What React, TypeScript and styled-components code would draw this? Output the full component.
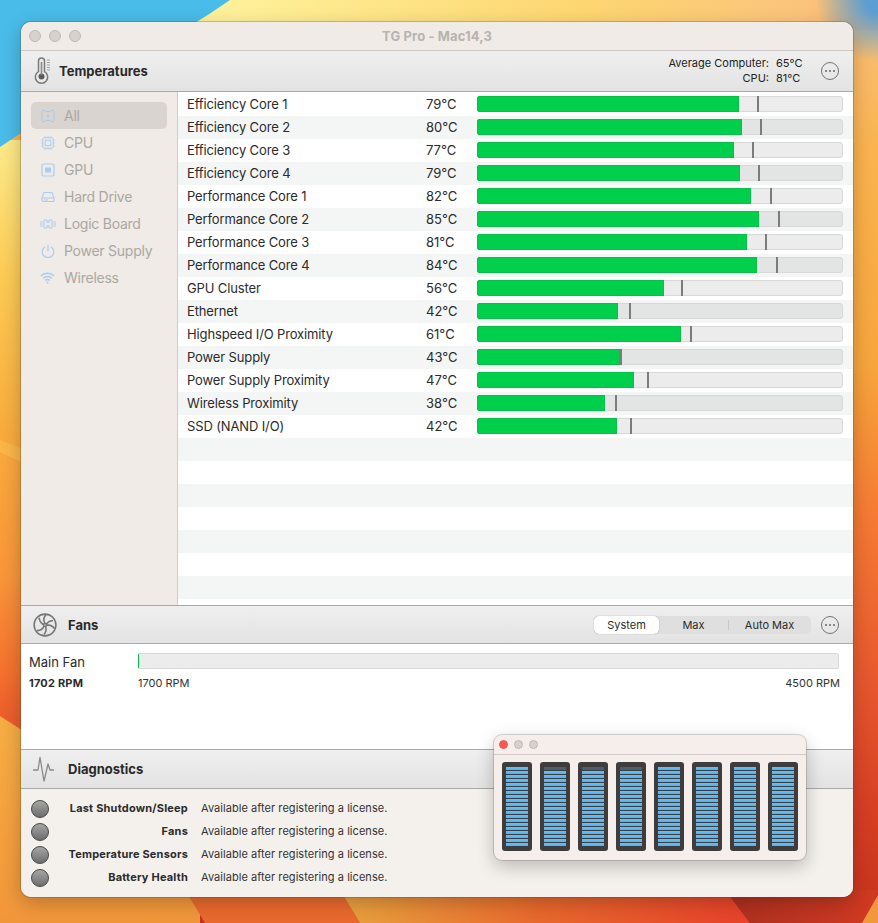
import React from "react";
import styled, { createGlobalStyle } from "styled-components";

const Global = createGlobalStyle`
  html, body { margin: 0; padding: 0; width: 878px; height: 923px; overflow: hidden; }
  body { font-family: "Inter", "Liberation Sans", Arial, sans-serif; -webkit-font-smoothing: antialiased; }
  #root { width: 878px; height: 923px; }
`;

const Desktop = styled.div`
  position: relative;
  width: 878px;
  height: 923px;
  overflow: hidden;
  padding: 22px 25px 26px 21px;
  box-sizing: border-box;
  background: #f08a38;
`;
const Wallpaper = styled.svg`
  position: absolute;
  inset: 0;
  width: 878px;
  height: 923px;
`;
const Window = styled.div`
  position: relative;
  display: flex;
  flex-direction: column;
  height: 875px;
  border-radius: 10px;
  overflow: hidden;
  background: #f4f0ec;
  box-shadow: 0 0 0 1px rgba(90, 70, 40, 0.28), 0 6px 20px rgba(0, 0, 0, 0.24);
`;
const TitleBar = styled.div`
  flex: none;
  height: 28px;
  display: flex;
  align-items: center;
  justify-content: center;
  position: relative;
  background: #f0ebe6;
  border-bottom: 1px solid #c9c7c5;
  color: #b7b3af;
  font: 700 13px "Inter", "Liberation Sans", sans-serif;
  letter-spacing: 0.12px;
`;
const Lights = styled.div`
  position: absolute;
  left: 8px;
  top: 8px;
  display: flex;
  gap: 8px;
`;
const Light = styled.span<{ $size?: number; $red?: boolean }>`
  display: block;
  width: ${(p) => p.$size ?? 12}px;
  height: ${(p) => p.$size ?? 12}px;
  border-radius: 50%;
  box-sizing: border-box;
  background: ${(p) => (p.$red ? "#fb5252" : "#d8d2ce")};
  border: 1px solid ${(p) => (p.$red ? "#e8605a" : "#bdb8b4")};
`;
const SectionHeader = styled.div<{ $h: number; $top?: boolean }>`
  flex: none;
  height: ${(p) => p.$h}px;
  box-sizing: content-box;
  display: flex;
  align-items: center;
  background: linear-gradient(#efefef, #e3e3e3);
  border-bottom: 1px solid #a9a9a9;
  ${(p) => p.$top && "border-top: 1px solid #a9a9a9;"}
`;
const HeaderIcon = styled.div<{ $w: number }>`
  flex: none;
  width: ${(p) => p.$w}px;
  display: flex;
  justify-content: center;
`;
const HeaderTitle = styled.div`
  font: 700 13px "Inter", "Liberation Sans", sans-serif;
  color: #2a2a2a;
`;
const HeaderRight = styled.div`
  margin-left: auto;
  display: flex;
  align-items: center;
`;
const Averages = styled.div`
  display: grid;
  grid-template-columns: auto 27px;
  column-gap: 7px;
  font: 400 11px/15px "Inter", "Liberation Sans", sans-serif;
  color: #222;
  text-align: right;
  margin-right: 18px;
  & > span:nth-child(even) { text-align: left; }
`;
const MoreBtn = styled.div`
  width: 18px;
  height: 18px;
  margin-right: 14px;
  border-radius: 50%;
  border: 1.2px solid #757575;
  box-sizing: border-box;
  display: flex;
  align-items: center;
  justify-content: center;
  gap: 1.6px;
  & > i { width: 2px; height: 2px; border-radius: 50%; background: #666; display: block; }
`;
const Main = styled.div`
  flex: none;
  height: 513px;
  display: flex;
`;
const Sidebar = styled.div`
  flex: none;
  width: 157px;
  box-sizing: border-box;
  padding: 10px 10px 0;
  border-right: 1px solid #cfcdcb;
  background: #f0ebe6;
  display: flex;
  flex-direction: column;
`;
const SideItem = styled.div<{ $active?: boolean }>`
  height: 27px;
  display: flex;
  align-items: center;
  border-radius: 5px;
  background: ${(p) => (p.$active ? "#d9d4d0" : "transparent")};
  color: #aba7a3;
  font: 400 14px "Inter", "Liberation Sans", sans-serif;
  letter-spacing: -0.25px;
`;
const SideIcon = styled.span`
  flex: none;
  width: 33px;
  display: flex;
  justify-content: center;
`;
const List = styled.div`
  flex: 1;
  background: #fff;
  padding-top: 1px;
  display: flex;
  flex-direction: column;
`;
const Row = styled.div<{ $alt: boolean }>`
  flex: none;
  height: 23px;
  box-sizing: border-box;
  padding-bottom: 1px;
  display: flex;
  align-items: center;
  background: ${(p) => (p.$alt ? "#f4f5f5" : "#fff")};
  font: 400 13px "Inter", "Liberation Sans", sans-serif;
  color: #2b2b2b;
`;
const RowName = styled.span`
  width: 248px;
  padding-left: 9px;
  box-sizing: border-box;
  letter-spacing: -0.13px;
`;
const RowTemp = styled.span`
  width: 51px;
`;
const Track = styled.div<{ $alt: boolean }>`
  position: relative;
  width: 366px;
  height: 16px;
  box-sizing: border-box;
  border: 1px solid #d8d8d8;
  border-radius: 3px;
  background: ${(p) => (p.$alt ? "#e3e4e4" : "#ececec")};
`;
const Fill = styled.div`
  position: absolute;
  left: -1px;
  top: -1px;
  bottom: -1px;
  background: #00cf4c;
  box-shadow: inset 0 0 0 1px #05c149;
  border-radius: 3px 0 0 3px;
`;
const Marker = styled.div`
  position: absolute;
  top: -1px;
  bottom: -1px;
  width: 2px;
  background: #7c7c7c;
`;
const FanBody = styled.div`
  flex: none;
  height: 106px;
  box-sizing: border-box;
  background: #fff;
  border-bottom: 1px solid #a9a9a9;
  padding: 9px 13px 0 8px;
  display: grid;
  grid-template-columns: 109px 1fr;
  grid-template-rows: 16px 17px;
  row-gap: 6px;
  font: 400 13px "Inter", "Liberation Sans", sans-serif;
  color: #2b2b2b;
`;
const FanName = styled.div`
  align-self: center;
  position: relative;
  top: 1px;
`;
const FanTrack = styled.div`
  height: 16px;
  margin-right: 1px;
  box-sizing: border-box;
  border: 1px solid #d8d8d8;
  border-left: 1px solid #00c04a;
  border-radius: 2px;
  background: #ececec;
`;
const FanRpm = styled.div`
  font: 700 11px/17px "Inter", "Liberation Sans", sans-serif;
  letter-spacing: 0.2px;
`;
const FanScale = styled.div`
  display: flex;
  justify-content: space-between;
  font: 400 11px/17px "Inter", "Liberation Sans", sans-serif;
  color: #333;
`;
const Segments = styled.div`
  display: flex;
  align-items: center;
  width: 217px;
  height: 18px;
  margin-right: 10px;
  border-radius: 5px;
  background: #dfdfdf;
  font: 400 11px "Inter", "Liberation Sans", sans-serif;
  color: #2b2b2b;
`;
const Segment = styled.div<{ $w: number; $on?: boolean; $sep?: boolean }>`
  width: ${(p) => p.$w}px;
  height: 18px;
  line-height: 18px;
  text-align: center;
  box-sizing: border-box;
  border-radius: 5px;
  background: ${(p) => (p.$on ? "#fff" : "transparent")};
  box-shadow: ${(p) => (p.$on ? "0 0 1px rgba(0,0,0,.45)" : "none")};
  position: relative;
  ${(p) => p.$sep && `&::before { content: ""; position: absolute; left: 0; top: 4px; bottom: 4px; width: 1px; background: #c8c8c8; }`}
`;
const DiagBody = styled.div`
  flex: 1;
  background: #f4f0ec;
  padding-top: 7px;
  display: flex;
  flex-direction: column;
`;
const DiagRow = styled.div`
  height: 23px;
  display: flex;
  align-items: center;
  font: 400 11px "Inter", "Liberation Sans", sans-serif;
  color: #333;
  letter-spacing: 0.05px;
`;
const Led = styled.span`
  flex: none;
  width: 18px;
  height: 18px;
  margin: 2px 0 0 10px;
  border-radius: 50%;
  box-sizing: border-box;
  border: 1px solid #444;
  background: linear-gradient(#a6a6a6, #6d6d6d);
`;
const DiagLabel = styled.span`
  width: 139px;
  text-align: right;
  font-weight: 700;
  margin-right: 13px;
  color: #2b2b2b;
  letter-spacing: 0.2px;
`;
const Mini = styled.div`
  position: absolute;
  left: 494px;
  top: 735px;
  width: 312px;
  height: 125px;
  border-radius: 8px;
  overflow: hidden;
  box-sizing: border-box;
  background: #f6eeeb;
  box-shadow: 0 0 0 1px rgba(120, 110, 105, 0.3), 0 6px 18px rgba(0, 0, 0, 0.24);
`;
const MiniBar = styled.div`
  height: 20px;
  box-sizing: border-box;
  border-bottom: 1px solid #d2cbc9;
  display: flex;
  align-items: center;
  padding-left: 5px;
  gap: 6px;
`;
const Meters = styled.div`
  display: flex;
  gap: 8px;
  padding: 7px 0 0 8px;
`;
const Meter = styled.div`
  width: 30px;
  height: 89px;
  box-sizing: border-box;
  border-radius: 3px;
  background: #3e3c3c;
  padding: 5px 4px 0;
  display: flex;
  flex-direction: column;
  gap: 1px;
`;
const Cell = styled.div<{ $dim?: boolean }>`
  flex: none;
  height: 3px;
  background: ${(p) => (p.$dim ? "#4a5f6c" : "linear-gradient(#66c0f7, #4cb4f4)")};
`;

const G = "#7a7a7a";
const ThermoIcon = () => (
  <svg width="20" height="28" viewBox="0 0 20 28" fill="none">
    <path d="M8.5 4a3 3 0 0 1 6 0v10.6a6.2 6.2 0 1 1-6 0z" stroke={G} strokeWidth="1.5" fill="#e9e9e9" />
    <circle cx="11.5" cy="19.6" r="3" fill="#5a5a5a" />
    <rect x="10.7" y="5" width="1.6" height="13" fill="#8a8a8a" />
    <path d="M17 3h3M17 5.5h3M17 8h3M17 10.5h3M17 13h3" stroke="#a0a0a0" strokeWidth="1.2" />
  </svg>
);
const FanIcon = () => (
  <svg width="24" height="24" viewBox="0 0 26 26" fill="none" stroke="#777" strokeWidth="1.7">
    <circle cx="13" cy="13" r="11.8" />
    <circle cx="13" cy="13" r="1.6" />
    <path d="M13 11.4C11 8 11 5 14 2M14.6 13.4c3.8-.8 6.4.2 8.6 3.6M12 14.3c-1.6 3.4-3.8 5-7.8 4.8M11.4 12.7C8.5 11 7 9 6.6 5M14.4 12.2c2-3 4.3-4.2 7.2-3.8M13.6 14.6c1.2 3.4.6 5.8-1.6 8.6" />
  </svg>
);
const PulseIcon = () => (
  <svg width="24" height="26" viewBox="0 0 24 26" fill="none" stroke="#8a8a8a" strokeWidth="1.3" strokeLinejoin="round">
    <path d="M0 14h5L7 1.5 11 25l4-17 2 6h4" />
  </svg>
);
const B = "#a9ccf2";
const AllIcon = () => (
  <svg width="14" height="14" viewBox="0 0 14 14" fill="none" stroke={B} strokeWidth="1">
    <path d="M1 1.5h3l.5 1h5l.5-1h3v11h-3l-.5-1h-5l-.5 1H1z" />
    <circle cx="7" cy="7" r="1.2" fill={B} stroke="none" />
  </svg>
);
const CpuIcon = () => (
  <svg width="14" height="14" viewBox="0 0 14 14" fill="none" stroke={B} strokeWidth="1">
    <rect x="1.8" y="1.8" width="10.4" height="10.4" rx="1.5" />
    <rect x="4.3" y="4.3" width="5.4" height="5.4" />
    <path d="M4 0v1.5M7 0v1.5M10 0v1.5M4 12.5V14M7 12.5V14M10 12.5V14M0 4h1.5M0 7h1.5M0 10h1.5M12.5 4H14M12.5 7H14M12.5 10H14" strokeWidth=".8" />
  </svg>
);
const GpuIcon = () => (
  <svg width="14" height="14" viewBox="0 0 14 14" fill="none" stroke={B} strokeWidth="1.2">
    <rect x="1" y="1" width="12" height="12" rx="1.5" />
    <rect x="4" y="4.5" width="6" height="5" fill={B} stroke="none" />
  </svg>
);
const DriveIcon = () => (
  <svg width="14" height="12" viewBox="0 0 14 12" fill="none" stroke={B} strokeWidth="1.1">
    <path d="M3 1.5h8l2 5.5v2.5a1 1 0 0 1-1 1H2a1 1 0 0 1-1-1V7z" />
    <path d="M1 7h12M3 9h4" />
  </svg>
);
const BoardIcon = () => (
  <svg width="16" height="10" viewBox="0 0 16 10" fill="none" stroke={B} strokeWidth="1">
    <path d="M4 1h3v2.5h2V1h3v8H9V6.5H7V9H4z" />
    <path d="M0 3h3M0 5h3M0 7h3M13 3h3M13 5h3M13 7h3" strokeWidth=".8" />
  </svg>
);
const PowerIcon = () => (
  <svg width="14" height="14" viewBox="0 0 14 14" fill="none" stroke={B} strokeWidth="1.2" strokeLinecap="round">
    <path d="M7 .8v6M3.8 3A5.8 5.8 0 1 0 10.2 3" />
  </svg>
);
const WifiIcon = () => (
  <svg width="15" height="12" viewBox="0 0 15 12" fill="none" stroke={B} strokeWidth="1.5">
    <path d="M.8 4a9.5 9.5 0 0 1 13.4 0M3 6.3a6.4 6.4 0 0 1 9 0M5.2 8.5a3.2 3.2 0 0 1 4.6 0" />
    <circle cx="7.5" cy="10.6" r="1" fill={B} stroke="none" />
  </svg>
);

const side: [string, React.ReactNode][] = [
  ["All", <AllIcon />],
  ["CPU", <CpuIcon />],
  ["GPU", <GpuIcon />],
  ["Hard Drive", <DriveIcon />],
  ["Logic Board", <BoardIcon />],
  ["Power Supply", <PowerIcon />],
  ["Wireless", <WifiIcon />],
];

const rows: [string, string, number, number][] = [
  ["Efficiency Core 1", "79°C", 739, 758],
  ["Efficiency Core 2", "80°C", 742, 761],
  ["Efficiency Core 3", "77°C", 734, 753],
  ["Efficiency Core 4", "79°C", 740, 759],
  ["Performance Core 1", "82°C", 751, 771],
  ["Performance Core 2", "85°C", 759, 779],
  ["Performance Core 3", "81°C", 747, 766],
  ["Performance Core 4", "84°C", 757, 777],
  ["GPU Cluster", "56°C", 664, 682],
  ["Ethernet", "42°C", 618, 630],
  ["Highspeed I/O Proximity", "61°C", 681, 691],
  ["Power Supply", "43°C", 620, 621],
  ["Power Supply Proximity", "47°C", 634, 648],
  ["Wireless Proximity", "38°C", 605, 616],
  ["SSD (NAND I/O)", "42°C", 617, 631],
];

const diag = ["Last Shutdown/Sleep", "Fans", "Temperature Sensors", "Battery Health"];
const dimmed = [false, true, true, true, false, false, false, false];

const More = () => (
  <MoreBtn>
    <i />
    <i />
    <i />
  </MoreBtn>
);

const Backdrop = () => (
  <Wallpaper viewBox="0 0 878 923">
    <defs>
      <linearGradient id="top" x1="230" y1="0" x2="878" y2="0" gradientUnits="userSpaceOnUse">
        <stop offset="0" stopColor="#fff199" />
        <stop offset="0.55" stopColor="#fdd670" />
        <stop offset="0.88" stopColor="#fbc47c" />
        <stop offset="1" stopColor="#f8b36c" />
      </linearGradient>
      <radialGradient id="corner" cx="878" cy="0" r="62" gradientUnits="userSpaceOnUse">
        <stop offset="0.2" stopColor="#5c9ed2" />
        <stop offset="1" stopColor="#5c9ed2" stopOpacity="0" />
      </radialGradient>
      <linearGradient id="left" x1="0" y1="140" x2="0" y2="720" gradientUnits="userSpaceOnUse">
        <stop offset="0" stopColor="#fdeb8a" />
        <stop offset="0.25" stopColor="#fcc953" />
        <stop offset="0.5" stopColor="#f9ac3e" />
        <stop offset="0.75" stopColor="#f9963a" />
        <stop offset="0.92" stopColor="#f4702e" />
        <stop offset="1" stopColor="#ec5c2b" />
      </linearGradient>
      <linearGradient id="right" x1="0" y1="20" x2="0" y2="923" gradientUnits="userSpaceOnUse">
        <stop offset="0" stopColor="#fac07a" />
        <stop offset="0.14" stopColor="#fab44f" />
        <stop offset="0.38" stopColor="#f8a63c" />
        <stop offset="0.55" stopColor="#f67a33" />
        <stop offset="0.72" stopColor="#e95a2e" />
        <stop offset="0.88" stopColor="#d73e23" />
        <stop offset="1" stopColor="#c6321e" />
      </linearGradient>
      <linearGradient id="bottomLeft" x1="0" y1="720" x2="0" y2="923" gradientUnits="userSpaceOnUse">
        <stop offset="0" stopColor="#f7ad44" />
        <stop offset="1" stopColor="#f2963a" />
      </linearGradient>
      <linearGradient id="bottomMid" x1="345" y1="0" x2="730" y2="0" gradientUnits="userSpaceOnUse">
        <stop offset="0" stopColor="#eaa23e" />
        <stop offset="0.5" stopColor="#e9692d" />
        <stop offset="1" stopColor="#e8452a" />
      </linearGradient>
      <linearGradient id="bottomDark" x1="725" y1="0" x2="878" y2="0" gradientUnits="userSpaceOnUse">
        <stop offset="0" stopColor="#ad2f20" />
        <stop offset="1" stopColor="#d23a22" />
      </linearGradient>
    </defs>
    <rect width="878" height="923" fill="url(#right)" />
    <rect width="878" height="30" fill="url(#top)" />
    <rect x="0" width="30" y="140" height="590" fill="url(#left)" />
    <path d="M0 440L21 448V462L0 452z" fill="#fbb548" />
    <path d="M0 0H230Q210 14 190 26Q70 100 0 147z" fill="#4abce9" />
    <rect width="878" height="70" fill="url(#corner)" />
    <path d="M0 716Q12 724 30 735V923H0z" fill="url(#bottomLeft)" />
    <rect x="0" y="890" width="200" height="33" fill="url(#bottomLeft)" />
    <path d="M185 890L205 923H360L340 890z" fill="#ea6a2e" />
    <path d="M340 890L360 923H750L725 890z" fill="url(#bottomMid)" />
    <path d="M725 890L750 923H865L878 890z" fill="url(#bottomDark)" />
    <path d="M878 895V923H862z" fill="#f2983c" />
  </Wallpaper>
);

export default function App() {
  return (
    <Desktop>
      <Global />
      <Backdrop />
      <Window>
        <TitleBar>
          <Lights>
            <Light />
            <Light />
            <Light />
          </Lights>
          TG Pro - Mac14,3
        </TitleBar>
        <SectionHeader $h={40}>
          <HeaderIcon $w={38}>
            <ThermoIcon />
          </HeaderIcon>
          <HeaderTitle>Temperatures</HeaderTitle>
          <HeaderRight>
            <Averages>
              <span>Average Computer:</span>
              <span>65°C</span>
              <span>CPU:</span>
              <span>81°C</span>
            </Averages>
            <More />
          </HeaderRight>
        </SectionHeader>
        <Main>
          <Sidebar>
            {side.map(([label, icon], i) => (
              <SideItem key={label} $active={i === 0}>
                <SideIcon>{icon}</SideIcon>
                {label}
              </SideItem>
            ))}
          </Sidebar>
          <List>
            {rows.map(([name, temp, fill, mark], i) => (
              <Row key={name} $alt={i % 2 === 1}>
                <RowName>{name}</RowName>
                <RowTemp>{temp}</RowTemp>
                <Track $alt={i % 2 === 1}>
                  <Fill style={{ width: fill - 477 }} />
                  <Marker style={{ left: mark - 479 }} />
                </Track>
              </Row>
            ))}
            {Array.from({ length: 7 }, (_, i) => (
              <Row key={i} $alt={i % 2 === 0} />
            ))}
          </List>
        </Main>
        <SectionHeader $h={37} $top>
          <HeaderIcon $w={47}>
            <FanIcon />
          </HeaderIcon>
          <HeaderTitle>Fans</HeaderTitle>
          <HeaderRight>
            <Segments>
              <Segment $w={65} $on>
                System
              </Segment>
              <Segment $w={69}>Max</Segment>
              <Segment $w={83} $sep>
                Auto Max
              </Segment>
            </Segments>
            <More />
          </HeaderRight>
        </SectionHeader>
        <FanBody>
          <FanName>Main Fan</FanName>
          <FanTrack />
          <FanRpm>1702 RPM</FanRpm>
          <FanScale>
            <span>1700 RPM</span>
            <span>4500 RPM</span>
          </FanScale>
        </FanBody>
        <SectionHeader $h={38}>
          <HeaderIcon $w={47}>
            <PulseIcon />
          </HeaderIcon>
          <HeaderTitle>Diagnostics</HeaderTitle>
        </SectionHeader>
        <DiagBody>
          {diag.map((d) => (
            <DiagRow key={d}>
              <Led />
              <DiagLabel>{d}</DiagLabel>
              Available after registering a license.
            </DiagRow>
          ))}
        </DiagBody>
      </Window>
      <Mini>
        <MiniBar>
          <Light $size={9} $red />
          <Light $size={9} />
          <Light $size={9} />
        </MiniBar>
        <Meters>
          {dimmed.map((dim, i) => (
            <Meter key={i}>
              {Array.from({ length: 20 }, (_, c) => (
                <Cell key={c} $dim={dim && c === 0} />
              ))}
            </Meter>
          ))}
        </Meters>
      </Mini>
    </Desktop>
  );
}
